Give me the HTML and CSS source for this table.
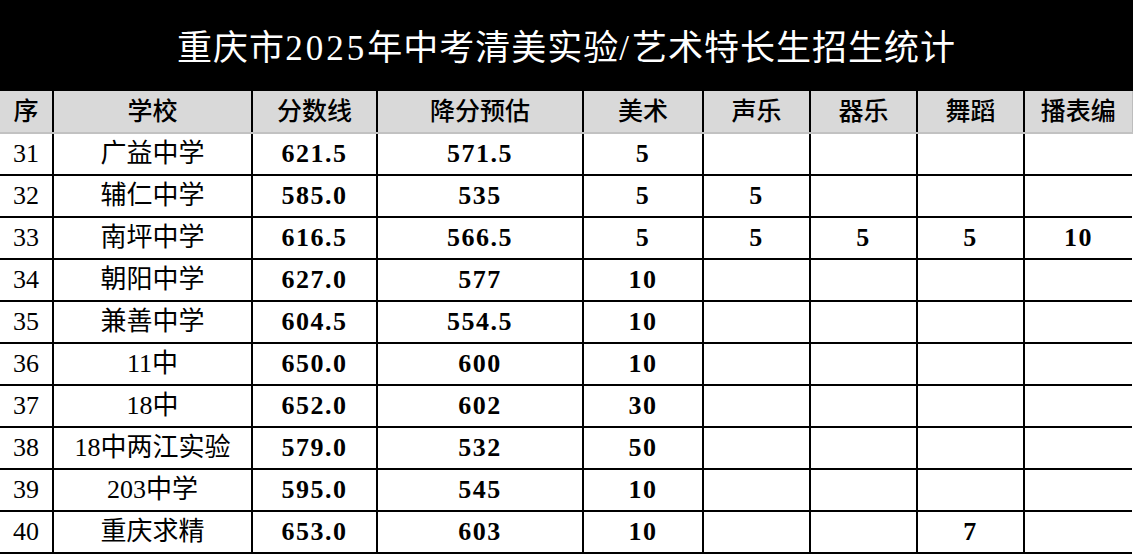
FILE: index.html
```html
<!DOCTYPE html>
<html lang="zh-CN">
<head>
<meta charset="utf-8">
<title>重庆市2025年中考清美实验/艺术特长生招生统计</title>
<link rel="stylesheet" href="styles.css">
</head>
<body>
<div class="sheet">
  <div class="title">重庆市<span class="latin">2025</span>年中考清美实验<span class="latin">/</span>艺术特长生招生统计</div>
  <table class="grid">
    <colgroup>
      <col class="c-seq"><col class="c-school"><col class="c-score"><col class="c-est">
      <col class="c-art"><col class="c-art2"><col class="c-art2"><col class="c-art2"><col class="c-art3">
    </colgroup>
    <thead>
      <tr>
        <th>序</th><th>学校</th><th>分数线</th><th>降分预估</th><th>美术</th><th>声乐</th><th>器乐</th><th>舞蹈</th><th>播表编</th>
      </tr>
    </thead>
    <tbody>
      <tr><td class="seq">31</td><td class="school">广益中学</td><td class="num">621.5</td><td class="num">571.5</td><td class="num">5</td><td></td><td></td><td></td><td></td></tr>
      <tr><td class="seq">32</td><td class="school">辅仁中学</td><td class="num">585.0</td><td class="num">535</td><td class="num">5</td><td class="num">5</td><td></td><td></td><td></td></tr>
      <tr><td class="seq">33</td><td class="school">南坪中学</td><td class="num">616.5</td><td class="num">566.5</td><td class="num">5</td><td class="num">5</td><td class="num">5</td><td class="num">5</td><td class="num">10</td></tr>
      <tr><td class="seq">34</td><td class="school">朝阳中学</td><td class="num">627.0</td><td class="num">577</td><td class="num">10</td><td></td><td></td><td></td><td></td></tr>
      <tr><td class="seq">35</td><td class="school">兼善中学</td><td class="num">604.5</td><td class="num">554.5</td><td class="num">10</td><td></td><td></td><td></td><td></td></tr>
      <tr><td class="seq">36</td><td class="school">11中</td><td class="num">650.0</td><td class="num">600</td><td class="num">10</td><td></td><td></td><td></td><td></td></tr>
      <tr><td class="seq">37</td><td class="school">18中</td><td class="num">652.0</td><td class="num">602</td><td class="num">30</td><td></td><td></td><td></td><td></td></tr>
      <tr><td class="seq">38</td><td class="school">18中两江实验</td><td class="num">579.0</td><td class="num">532</td><td class="num">50</td><td></td><td></td><td></td><td></td></tr>
      <tr><td class="seq">39</td><td class="school">203中学</td><td class="num">595.0</td><td class="num">545</td><td class="num">10</td><td></td><td></td><td></td><td></td></tr>
      <tr><td class="seq">40</td><td class="school">重庆求精</td><td class="num">653.0</td><td class="num">603</td><td class="num">10</td><td></td><td></td><td class="num">7</td><td></td></tr>
    </tbody>
  </table>
</div>
</body>
</html>
```
FILE: styles.css
```css
html, body {
  margin: 0;
  padding: 0;
  background: #ffffff;
}

body {
  font-family: "Liberation Serif", "Noto Sans CJK SC", serif;
  color: #000;
}

.sheet {
  width: 1133px;
  overflow: hidden;
}

.title {
  height: 91px;
  background: #000;
  color: #fff;
  font-size: 35px;
  line-height: 98px;
  text-align: center;
  letter-spacing: 1px;
}

.title .latin {
  letter-spacing: 3px;
}

.grid {
  width: 1132px;
  table-layout: fixed;
  border-collapse: collapse;
}

.c-seq { width: 53px; }
.c-school { width: 199px; }
.c-score { width: 125px; }
.c-est { width: 206px; }
.c-art { width: 120px; }
.c-art2 { width: 107px; }
.c-art3 { width: 108px; }

.grid th,
.grid td {
  padding: 0;
  text-align: center;
  vertical-align: middle;
  border-left: 2px solid #000;
  white-space: nowrap;
  overflow: hidden;
}

.grid th:first-child,
.grid td:first-child {
  border-left: none;
}

.grid thead tr {
  height: 42px;
}

.grid th {
  background: #d9d9d9;
  font-size: 25px;
  font-weight: 500;
  border-bottom: 2px solid #c2c2c2;
  line-height: 40px;
}

.grid th:last-child {
  border-right: 1px solid #bdbdbd;
}

.grid tbody tr {
  height: 42px;
}

.grid td {
  border-bottom: 2px solid #000;
  font-size: 26px;
  line-height: 40px;
}

.seq {
  font-size: 26px;
}

.school {
  font-size: 25px;
}

.num {
  font-weight: bold;
  letter-spacing: 1.5px;
}
```
